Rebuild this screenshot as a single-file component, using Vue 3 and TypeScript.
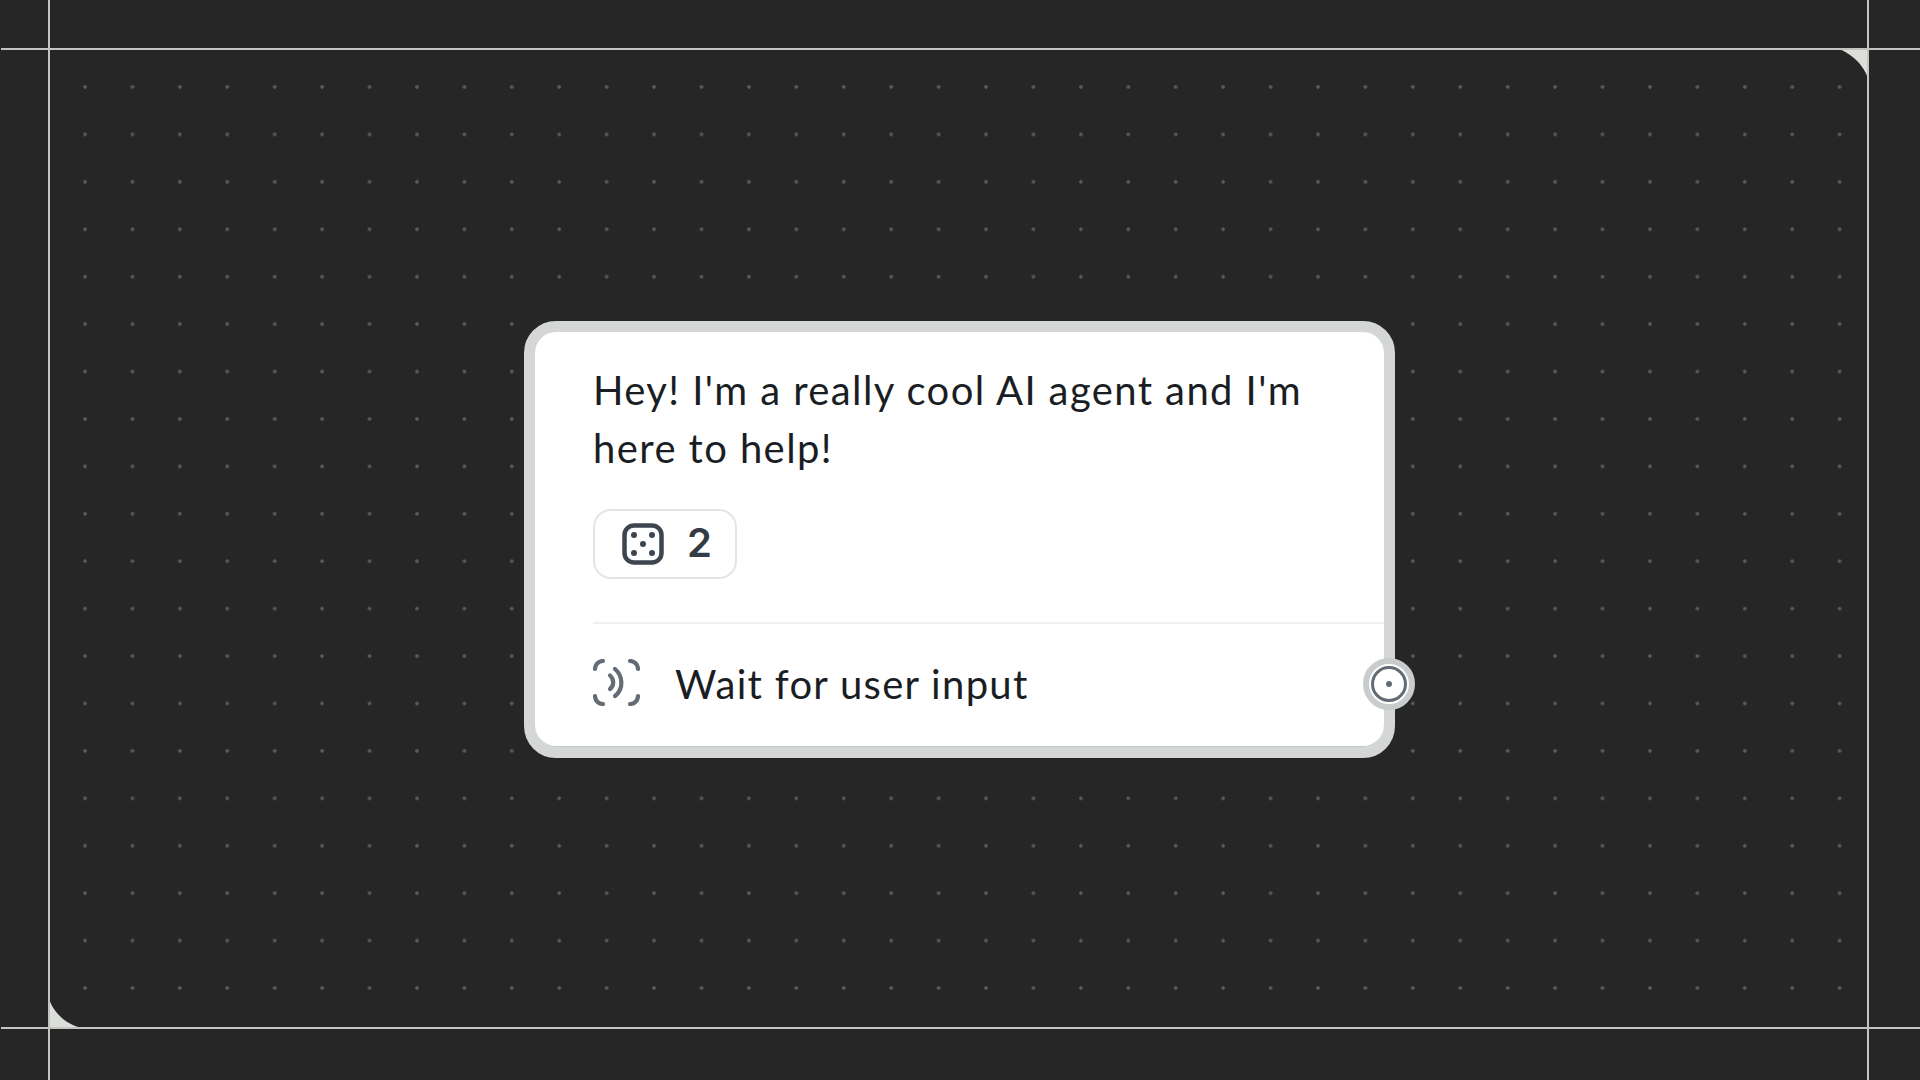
<template>
  <div class="page">
    <!-- crop marks -->
    <i class="line line-h line-top" />
    <i class="line line-h line-bottom" />
    <i class="line line-v line-left" />
    <i class="line line-v line-right" />

    <main class="canvas">
      <svg class="corner corner-tr" width="34" height="34" viewBox="0 0 34 34">
        <path d="M4 0C16 3 31 17 34 30V0Z" fill="#dcdedb" />
      </svg>
      <svg class="corner corner-bl" width="34" height="34" viewBox="0 0 34 34">
        <path d="M0 4C3 17 17 31 33 34H0Z" fill="#dcdedb" />
      </svg>

      <section class="card">
        <div class="body">
          <p class="message">{{ message }}</p>
          <div class="chip">
            <svg class="dice" width="42" height="42" viewBox="0 0 42 42" fill="none">
              <rect x="2.500" y="2.500" width="37" height="37" rx="9.500" stroke="#3d4650" stroke-width="4.500" />
              <circle v-for="d in diceDots" :key="d[0] + '-' + d[1]" :cx="d[0]" :cy="d[1]" r="3" fill="#3d4650" />
            </svg>
            <span class="chip-count">{{ count }}</span>
          </div>
        </div>
        <div class="footer">
          <svg class="wave" width="47" height="47" viewBox="0 0 47 47" fill="none" stroke="#646c76" stroke-width="4.200" stroke-linecap="round">
            <path d="M2 10A8 8 0 0 1 10 2" />
            <path d="M37 2A8 8 0 0 1 45 10" />
            <path d="M2 37A8 8 0 0 0 10 45" />
            <path d="M37 45A8 8 0 0 0 45 37" />
            <path d="M22 10c8 7 9 20 0 27" />
            <path d="M17 16.500c4 3.500 4.500 10 0 13.500" />
          </svg>
          <span class="footer-label">Wait for user input</span>
          <div class="handle">
            <span class="handle-ring"><span class="handle-dot" /></span>
          </div>
        </div>
      </section>
    </main>
  </div>
</template>

<script setup lang="ts">
const message = "Hey! I'm a really cool AI agent and I'm here to help!"
const count = 2
const diceDots: [number, number][] = [
  [12, 12],
  [30, 12],
  [21, 21],
  [12, 30],
  [30, 30],
]
</script>

<style>
html,
body {
  margin: 0;
  background: #262626;
}
</style>

<style scoped>
.page {
  position: relative;
  box-sizing: border-box;
  width: 1920px;
  height: 1080px;
  padding: 49px 52px 52px 49px;
  display: flex;
  background: #262626;
  overflow: hidden;
  font-family: Lato, "Noto Sans", sans-serif;
}

.line {
  position: absolute;
  z-index: 2;
  background: #c4c5c0;
}
.line-h { left: 1px; right: 0; height: 2px; }
.line-v { top: 0; bottom: 0; width: 2px; }
.line-top { top: 48px; }
.line-bottom { top: 1027px; }
.line-left { left: 48px; }
.line-right { left: 1867px; }

.corner {
  position: absolute;
}
.corner-tr { top: 0; right: 0; }
.corner-bl { bottom: 0; left: 0; }

.canvas {
  position: relative;
  flex: 1;
  display: flex;
  align-items: center;
  justify-content: center;
  background-color: #262626;
  background-image: radial-gradient(circle, #5a5a5a 0, #5a5a5a 1.4px, transparent 2.2px);
  background-size: 47.43px 47.43px;
  background-position: 12.3px 14.3px;
}

.card {
  position: relative;
  box-sizing: border-box;
  width: 871px;
  height: 437px;
  margin: 2px 0 0 2px;
  border: 11px solid #d4d7d6;
  border-radius: 32px;
  background: #fff;
  display: flex;
  flex-direction: column;
  box-shadow: inset 0 -1px 0 #c4c7c7;
}

.body {
  padding: 29px 58px 0;
  height: 290px;
  box-sizing: border-box;
}

.message {
  margin: 0;
  font-size: 40px;
  line-height: 58px;
  letter-spacing: 1.4px;
  color: #1a1e24;
}

.chip {
  box-sizing: border-box;
  display: flex;
  align-items: center;
  width: 144px;
  height: 70px;
  margin-top: 32px;
  padding-left: 27px;
  border: 2px solid #e4e6e6;
  border-radius: 18px;
}
.dice { flex: none; }
.chip-count {
  margin-left: 23px;
  font-family: Inter, Lato, sans-serif;
  font-size: 40px;
  font-weight: 600;
  line-height: 1;
  margin-top: -3px;
  color: #333b45;
}

.footer {
  position: relative;
  box-sizing: border-box;
  display: flex;
  align-items: center;
  margin-left: 58px;
  height: 125px;
  padding-bottom: 7px;
  border-top: 2px solid #eff0f0;
}
.wave { flex: none; }
.footer-label {
  margin: 3px 0 0 35px;
  font-size: 40px;
  letter-spacing: 1.3px;
  color: #1a1e24;
}

.handle {
  position: absolute;
  top: 34px;
  right: -31px;
  box-sizing: border-box;
  width: 52px;
  height: 52px;
  display: grid;
  place-items: center;
  border-radius: 50%;
  background: #fff;
  border: 6px solid #c9cccc;
}
.handle-ring {
  box-sizing: border-box;
  width: 36px;
  height: 36px;
  display: grid;
  place-items: center;
  border-radius: 50%;
  border: 3px solid #646c76;
}
.handle-dot {
  width: 6px;
  height: 6px;
  border-radius: 50%;
  background: #646c76;
}
</style>
